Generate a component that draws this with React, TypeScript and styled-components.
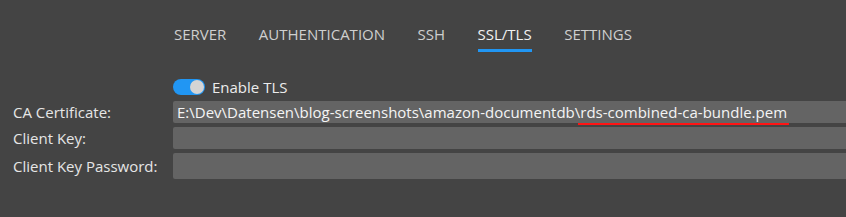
import React from 'react';
import styled, { createGlobalStyle } from 'styled-components';

const GlobalStyle = createGlobalStyle`
  html, body {
    margin: 0;
    padding: 0;
    background: #444444;
  }
  body {
    font-family: 'Open Sans', 'Noto Sans', sans-serif;
  }
`;

const Page = styled.div`
  width: 846px;
  height: 217px;
  background: #444444;
  overflow: hidden;
`;

const TabBar = styled.nav`
  display: flex;
  gap: 32.5px;
  padding: 24px 0 0 174px;
`;

const Tab = styled.div<{ $active?: boolean }>`
  font-size: 15px;
  line-height: 20px;
  padding-bottom: 5px;
  color: ${(p) => (p.$active ? '#f2f2f2' : '#cfcfcf')};
  border-bottom: 3px solid ${(p) => (p.$active ? '#2196f3' : 'transparent')};
  text-transform: uppercase;
`;

const Form = styled.div`
  display: grid;
  grid-template-columns: 173px 1fr;
  grid-template-rows: 20px 22px 22px 26px;
  row-gap: 4px;
  margin-top: 25px;
`;

const Label = styled.label`
  padding-left: 13px;
  font-size: 15px;
  color: #e6e6e6;
  display: flex;
  align-items: center;
`;

const ToggleRow = styled.div`
  grid-column: 2;
  display: flex;
  align-items: center;
  gap: 7px;
  font-size: 15px;
  color: #ececec;
`;

const Switch = styled.div<{ $on?: boolean }>`
  width: 32px;
  height: 16px;
  border-radius: 8px;
  background: ${(p) => (p.$on ? '#2196f3' : '#777')};
  display: flex;
  align-items: center;
  justify-content: ${(p) => (p.$on ? 'flex-end' : 'flex-start')};
  padding: 0 1px;
  box-sizing: border-box;
`;

const Knob = styled.div`
  width: 14px;
  height: 14px;
  border-radius: 50%;
  background: #d4d4d4;
`;

const Field = styled.div`
  background: #646464;
  border-radius: 2px 0 0 2px;
  padding-left: 4px;
  font-size: 15px;
  line-height: 22px;
  color: #f4f4f4;
  white-space: nowrap;
`;

// red annotation line drawn under the file name
const Marked = styled.span`
  position: relative;
  &::after {
    content: '';
    position: absolute;
    left: 3px;
    right: -2px;
    bottom: -3px;
    height: 2px;
    background: #ff1414;
  }
`;

const tabs = ['Server', 'Authentication', 'SSH', 'SSL/TLS', 'Settings'];

export default function App() {
  return (
    <Page>
      <GlobalStyle />
      <TabBar>
        {tabs.map((t) => (
          <Tab key={t} $active={t === 'SSL/TLS'}>
            {t}
          </Tab>
        ))}
      </TabBar>
      <Form>
        <ToggleRow>
          <Switch $on>
            <Knob />
          </Switch>
          Enable TLS
        </ToggleRow>

        <Label>CA Certificate:</Label>
        <Field>
          E:\Dev\Datensen\blog-screenshots\amazon-documentdb<Marked>\rds-combined-ca-bundle.pem</Marked>
        </Field>

        <Label>Client Key:</Label>
        <Field />

        <Label>Client Key Password:</Label>
        <Field />
      </Form>
    </Page>
  );
}
